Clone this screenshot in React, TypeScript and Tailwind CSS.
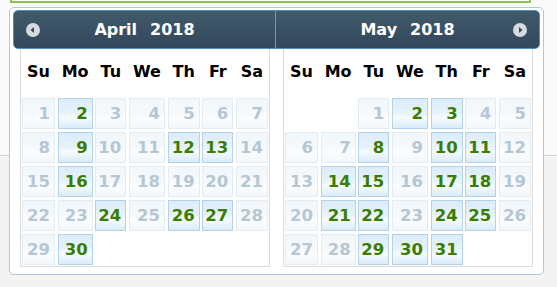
import React from "react"

type Day = { n: number; on: boolean } | null

// April 2018 and May 2018, "on" = selectable day
const april: Day[] = [
  1, 2, 3, 4, 5, 6, 7, 8, 9, 10, 11, 12, 13, 14, 15, 16, 17, 18, 19, 20, 21, 22, 23, 24, 25, 26, 27, 28, 29, 30,
].map((n) => ({ n, on: [2, 9, 12, 13, 16, 24, 26, 27, 30].includes(n) }))

const may: Day[] = [
  null,
  null,
  ...Array.from({ length: 31 }, (_, i) => i + 1).map((n) => ({
    n,
    on: [2, 3, 8, 10, 11, 14, 15, 17, 18, 21, 22, 24, 25, 29, 30, 31].includes(n),
  })),
]

const dayNames = ["Su", "Mo", "Tu", "We", "Th", "Fr", "Sa"]

function Arrow({ dir }: { dir: "prev" | "next" }) {
  return (
    <svg width="16" height="16" viewBox="0 0 16 16" aria-hidden="true">
      <circle cx="8" cy="8" r="7" fill="#d5dbe1" />
      {dir === "prev" ? (
        <path d="M5.5 8 L9 5 L9 11 Z" fill="#34495a" />
      ) : (
        <path d="M10.5 8 L7 5 L7 11 Z" fill="#34495a" />
      )}
    </svg>
  )
}

function Month({ days }: { days: Day[] }) {
  const cells = [...days]
  while (cells.length % 7) cells.push(null)
  return (
    <div className="flex h-[218px] flex-col border-x border-b border-[#dcdcdc] bg-white px-[1px]">
      <div className="grid h-[46px] grid-cols-[33px_35px_31px_36px_32px_31px_32px] items-center gap-x-[2.67px] text-[16px] font-bold text-black">
        {dayNames.map((d) => (
          <div key={d} className="text-center">
            {d}
          </div>
        ))}
      </div>
      <div className="mt-[3px] grid grid-cols-[33px_35px_31px_36px_32px_31px_32px] gap-x-[2.67px] gap-y-[3px]">
        {cells.map((c, i) =>
          c ? (
            <div
              key={i}
              className={
                c.on
                  ? "h-[31px] border border-[#b3d2ea] bg-[linear-gradient(to_bottom,#dcecf9_0%,#e6f2fb_48%,#f6fbfe_64%,#d9ebf9_100%)] pr-[4px] text-right text-[16.5px] leading-[29px] font-bold text-[#3b7c02]"
                  : "h-[31px] border border-[#e4ecf3] bg-[linear-gradient(to_bottom,#f2f7fb_0%,#f5f9fc_50%,#fbfdfe_64%,#f2f7fb_100%)] pr-[4px] text-right text-[16.5px] leading-[29px] font-bold text-[#b5c6d5]"
              }
            >
              {c.n}
            </div>
          ) : (
            <div key={i} className="h-[31px]" />
          ),
        )}
      </div>
    </div>
  )
}

export default function App() {
  return (
    <div className="relative h-[287px] w-[557px] overflow-hidden bg-[#f3f3f3] font-['DejaVu_Sans',sans-serif]">
      {/* page behind the popup */}
      <div className="h-[156px] border-b border-[#d2d2d2] bg-[#fafafa]">
        <div className="ml-[10px] h-[3px] w-[521px] border-x-2 border-b-2 border-[#8cc34e] bg-white" />
      </div>

      {/* datepicker popup */}
      <div className="absolute top-[7px] left-[9px] h-[268px] w-[535px] rounded-[5px] border border-[#a8cbe4] bg-white px-[3px] pt-[2px]">
        <div className="flex h-[39px] rounded-[5px] border border-[#4f8dc2] bg-[linear-gradient(to_bottom,#405a6c,#33485a)] text-[16px] font-bold text-white">
          <div className="flex w-[262px] items-center border-r border-[#5f9ed3] pl-[11px]">
            <Arrow dir="prev" />
            <div className="flex flex-1 justify-center gap-[13px] pr-[27px]">
              <span>April</span>
              <span>2018</span>
            </div>
          </div>
          <div className="flex flex-1 items-center pr-[11px]">
            <div className="flex flex-1 justify-center gap-[13px] pl-[27px]">
              <span>May</span>
              <span>2018</span>
            </div>
            <Arrow dir="next" />
          </div>
        </div>
        <div className="flex">
          <div className="w-[263px] pr-[6px] pl-[7px]">
            <Month days={april} />
          </div>
          <div className="w-[264px] pr-[7px] pl-[7px]">
            <Month days={may} />
          </div>
        </div>
      </div>
    </div>
  )
}
